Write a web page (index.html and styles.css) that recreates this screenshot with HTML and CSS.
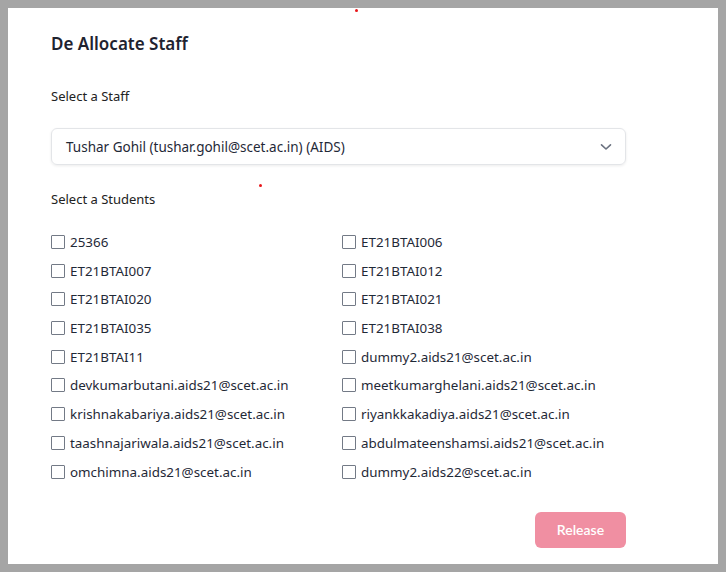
FILE: index.html
```html
<!DOCTYPE html>
<html>
<head>
<meta charset="utf-8">
<link rel="stylesheet" href="styles.css">
</head>
<body>
<div class="modal">
  <h2 class="title">De Allocate Staff</h2>
  <label class="label staff-label">Select a Staff</label>
  <div class="select">
    <span class="select-text">Tushar Gohil (tushar.gohil@scet.ac.in) (AIDS)</span>
    <svg class="chev" width="12" height="8" viewBox="0 0 12 8"><path d="M1.5 1.8 L6 6 L10.5 1.8" fill="none" stroke="#6b7280" stroke-width="1.6" stroke-linecap="round" stroke-linejoin="round"/></svg>
  </div>
  <label class="label students-label">Select a Students</label>
  <div class="grid">
    <label class="item"><span class="box"></span>25366</label>
    <label class="item"><span class="box"></span>ET21BTAI006</label>
    <label class="item"><span class="box"></span>ET21BTAI007</label>
    <label class="item"><span class="box"></span>ET21BTAI012</label>
    <label class="item"><span class="box"></span>ET21BTAI020</label>
    <label class="item"><span class="box"></span>ET21BTAI021</label>
    <label class="item"><span class="box"></span>ET21BTAI035</label>
    <label class="item"><span class="box"></span>ET21BTAI038</label>
    <label class="item"><span class="box"></span>ET21BTAI11</label>
    <label class="item"><span class="box"></span>dummy2.aids21@scet.ac.in</label>
    <label class="item"><span class="box"></span>devkumarbutani.aids21@scet.ac.in</label>
    <label class="item"><span class="box"></span>meetkumarghelani.aids21@scet.ac.in</label>
    <label class="item"><span class="box"></span>krishnakabariya.aids21@scet.ac.in</label>
    <label class="item"><span class="box"></span>riyankkakadiya.aids21@scet.ac.in</label>
    <label class="item"><span class="box"></span>taashnajariwala.aids21@scet.ac.in</label>
    <label class="item"><span class="box"></span>abdulmateenshamsi.aids21@scet.ac.in</label>
    <label class="item"><span class="box"></span>omchimna.aids21@scet.ac.in</label>
    <label class="item"><span class="box"></span>dummy2.aids22@scet.ac.in</label>
  </div>
  <div class="actions">
    <button class="release">Release</button>
  </div>
  <span class="dot dot1"></span>
  <span class="dot dot2"></span>
</div>
</body>
</html>
```
FILE: styles.css
```css
html {
  background: #a5a5a5;
  height: 100%;
}
body {
  margin: 8px;
  height: 556px;
  background: #ffffff;
  font-family: "Noto Sans", "Open Sans", sans-serif;
  color: #1f2937;
  overflow: hidden;
}
.modal {
  position: relative;
  width: 575px;
  padding: 25px 0 0 43px;
  display: flex;
  flex-direction: column;
}
.title {
  margin: 0;
  font-size: 17px;
  font-weight: 600;
  line-height: 22px;
  color: #1f2330;
}
.label {
  display: block;
  font-size: 13px;
  line-height: 18px;
  color: #222;
}
.staff-label {
  margin-top: 32px;
}
.select {
  margin-top: 23px;
  height: 37px;
  box-sizing: border-box;
  border: 1px solid #e3e5e8;
  border-radius: 6px;
  box-shadow: 0 1px 3px rgba(0,0,0,0.08);
  display: flex;
  align-items: center;
  justify-content: space-between;
  padding: 0 13px 0 14px;
}
.select-text {
  font-size: 13.5px;
  color: #1f2937;
}
.chev {
  display: block;
}
.students-label {
  margin-top: 25px;
}
.grid {
  margin-top: 24px;
  display: grid;
  grid-template-columns: 291px 1fr;
  row-gap: 8.7px;
}
.item {
  display: flex;
  align-items: center;
  height: 20px;
  font-size: 13.4px;
  color: #1f2937;
}
.box {
  width: 12px;
  height: 12px;
  border: 1px solid #737a86;
  border-radius: 1px;
  margin-right: 5px;
  flex: none;
}
.actions {
  display: flex;
  justify-content: flex-end;
  margin-top: 30px;
}
.release {
  width: 91px;
  height: 36px;
  border: none;
  border-radius: 6px;
  background: #f08fa2;
  color: #ffffff;
  font-family: "Lato", sans-serif;
  font-size: 14px;
  font-weight: 600;
}
.dot {
  position: absolute;
  width: 3px;
  height: 3px;
  border-radius: 50%;
  background: #e8161a;
}
.dot1 {
  left: 347px;
  top: 1px;
}
.dot2 {
  left: 251px;
  top: 176px;
}
```
